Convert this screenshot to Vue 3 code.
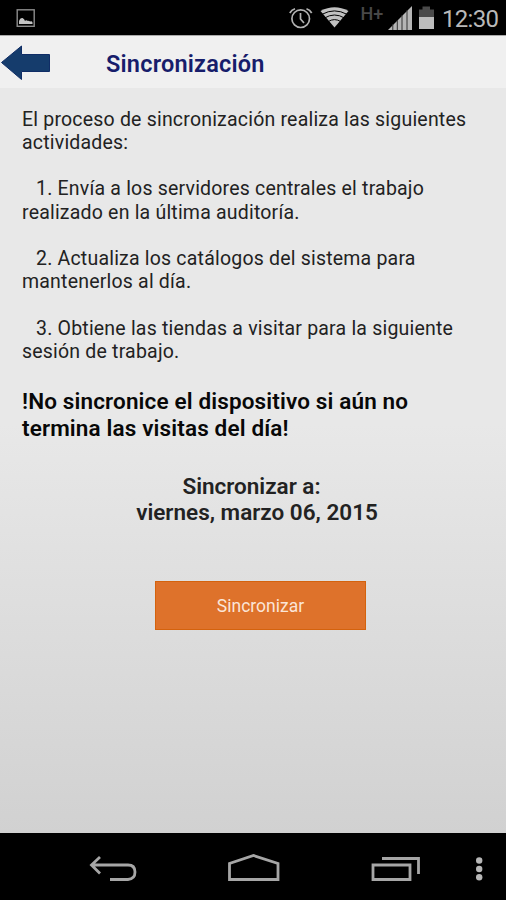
<script setup>
const steps = [
  ['1. Envía a los servidores centrales el trabajo', 'realizado en la última auditoría.'],
  ['2. Actualiza los catálogos del sistema para', 'mantenerlos al día.'],
  ['3. Obtiene las tiendas a visitar para la siguiente', 'sesión de trabajo.'],
]
</script>

<template>
  <div class="screen">
    <div class="status">
      <svg class="picture" width="20" height="20" viewBox="0 0 20 20">
        <rect x="1.2" y="0.800" width="17" height="16.500" fill="none" stroke="#8c8c8c" stroke-width="1.4" />
        <path d="M3 15V12Q4 8.500 6.500 9Q8.500 10 9 12Q10 10.500 12 12Q13 11.500 14 12.500Q16 11.500 16.500 13.500V15Z" fill="#c4c4c4" />
      </svg>
      <svg class="indicators" width="156" height="30" viewBox="286 3 156 30">
        <g fill="none" stroke="#b2b2b2" stroke-width="1.7">
          <circle cx="300.700" cy="18.700" r="8.800" />
          <path d="M300.500 13V19L304 23M289.800 13Q291.500 10 295 8.800M306.500 8.800Q310 10 311.700 13" />
        </g>
        <path d="M320.500 11Q334.500 3.500 348.500 11L334.500 27.500Z" fill="#c1c1c1" />
        <g fill="none" stroke="#000" stroke-width="1">
          <path d="M322 14.300Q334.500 7.500 347 14.300M324.500 18Q334.500 12 344.500 18M328 21.700Q334.500 17.500 341 21.700" />
        </g>
        <text x="360.500" y="19.500" class="network">H+</text>
        <path d="M388 30L412 6V30Z" fill="#b5b5b5" />
        <path d="M392.800 24V30M397.300 20V30M402 15V30M407 10V30" stroke="#333" stroke-width="1" />
        <path d="M419 9.500H422.500V6.500H430V9.500H434V17H419Z" fill="#4a4a4a" />
        <path d="M419 17H434V29H419Z" fill="#bdbdbd" />
      </svg>
      <span class="clock">12:30</span>
    </div>

    <header class="header">
      <svg width="51" height="38" viewBox="0 0 51 38">
        <path d="M1.500 18.500L21.500 2V10.500H49.500V27.500H21.500V35.500Z" fill="#153c6c" stroke="#102d66" />
      </svg>
      <h1>Sincronización</h1>
    </header>

    <main class="content">
      <p class="intro">El proceso de sincronización realiza las siguientes<br />actividades:</p>
      <p v-for="step in steps" :key="step[0]" class="step">{{ step[0] }}<br />{{ step[1] }}</p>
      <p class="warning">!No sincronice el dispositivo si aún no<br />termina las visitas del día!</p>
      <div class="date">
        <p class="date-label">Sincronizar a:</p>
        <p class="date-value">viernes, marzo 06, 2015</p>
      </div>
      <button class="sync">Sincronizar</button>
    </main>

    <nav class="nav">
      <svg width="506" height="66" viewBox="0 834 506 66">
        <g fill="none" stroke="#a6a6a6" stroke-width="2.8">
          <path d="M91.500 865H128Q135 865 135 872T128 879.500H110M100 857L91.500 865L100 873.500" />
          <path d="M229.500 879.500V863.500L253.500 855.500L278 863.500V879.500Z" />
          <path d="M373 865H410V879.500H373ZM382 858.500H418.500V874" />
        </g>
        <g fill="#b7b7b7">
          <circle cx="479.200" cy="860.500" r="3.200" />
          <circle cx="479.200" cy="869" r="3.200" />
          <circle cx="479.200" cy="877.200" r="3.200" />
        </g>
      </svg>
    </nav>
  </div>
</template>

<style>
body {
  margin: 0;
  background: #000;
}
</style>

<style scoped>
.screen {
  display: flex;
  flex-direction: column;
  width: 506px;
  height: 900px;
  overflow: hidden;
  background: #000;
  color: #222;
  font-family: Roboto, "Liberation Sans", sans-serif;
}

.status {
  display: flex;
  align-items: center;
  box-sizing: border-box;
  height: 35px;
  padding-left: 16px;
}

.picture {
  margin-top: 2px;
}

.indicators {
  margin-left: 250px;
}

.network {
  fill: #484848;
  font-size: 18px;
  font-weight: 500;
}

.clock {
  margin-top: 2px;
  color: #b9b9b9;
  font-size: 24px;
  line-height: 30px;
  letter-spacing: -0.7px;
}

.header {
  display: flex;
  box-sizing: border-box;
  height: 53px;
  padding-top: 8px;
  border-top: 1px solid #aaa;
  background: #f0f0f0;
}

h1 {
  margin: 7px 0 0 55px;
  color: #171d6b;
  font-size: 23.500px;
  font-weight: 600;
  line-height: 26px;
  letter-spacing: 0.2px;
}

.content {
  display: flex;
  flex-direction: column;
  box-sizing: border-box;
  height: 745px;
  padding: 19.500px 22px 0;
  background: linear-gradient(#e8e8e8 0%, #e8e8e8 45%, #d1d1d1 100%);
}

p {
  margin: 0;
  white-space: nowrap;
}

.intro,
.step {
  margin-bottom: 23.250px;
  font-size: 19.500px;
  line-height: 23.250px;
  letter-spacing: 0.2px;
}

.step {
  text-indent: 14px;
}

.warning {
  margin-top: 1.500px;
  color: #080808;
  font-size: 22.500px;
  font-weight: 600;
  line-height: 26.500px;
  letter-spacing: 0.140px;
}

.date {
  margin-top: 31.500px;
  text-align: center;
  font-size: 22.500px;
  font-weight: 600;
  line-height: 26.500px;
}

.date-label {
  padding-right: 3px;
}

.date-value {
  padding-left: 8px;
}

.sync {
  flex: none;
  width: 211px;
  height: 49px;
  margin: 55px 0 0 133px;
  padding: 1px 0 0;
  border: 1px solid #d4620d;
  background: #de722b;
  color: #fbe5d7;
  font-family: inherit;
  font-size: 17.500px;
}

.nav {
  height: 67px;
  background: #000;
}

.nav svg {
  display: block;
  margin-top: 1px;
}
</style>
